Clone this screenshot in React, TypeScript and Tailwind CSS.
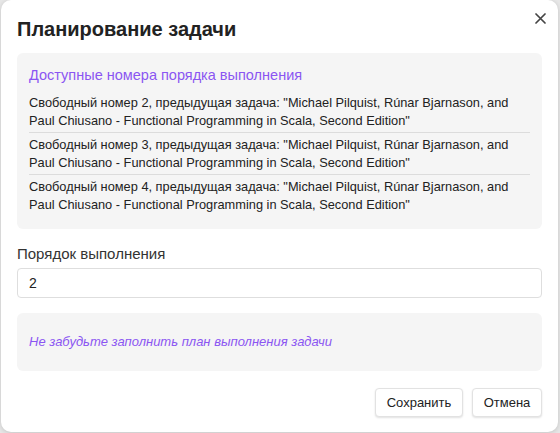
const items = [2, 3, 4].map(
  (n) =>
    `Свободный номер ${n}, предыдущая задача: "Michael Pilquist, Rúnar Bjarnason, and Paul Chiusano - Functional Programming in Scala, Second Edition"`
);

export default function App() {
  return (
    <div className="h-[433px] w-[560px] bg-[#e6e6e6] pl-px pr-[2px] pb-px font-['Liberation_Sans',Arial,sans-serif]">
      <div className="relative flex h-full flex-col rounded-[10px] bg-white px-4 pt-[17px] shadow-[0_1px_4px_rgba(0,0,0,0.15)]">
        <button className="absolute right-[12px] top-[12px] flex h-[12px] w-[12px] items-center justify-center text-[#444]">
          <svg width="11" height="11" viewBox="0 0 11 11" fill="none" stroke="currentColor" strokeWidth="1.7" strokeLinecap="round">
            <path d="M1 1l9 9M10 1l-9 9" />
          </svg>
        </button>

        <h1 className="text-[20px] font-bold leading-[24px] text-[#222]">Планирование задачи</h1>

        <div className="mt-[12px] rounded-[6px] bg-[#f5f5f5] px-3 pt-3 pb-[13px]">
          <h2 className="text-[14.5px] leading-5 text-[#8b55f2]">Доступные номера порядка выполнения</h2>
          <ul className="mt-[6px]">
            {items.map((t, i) => (
              <li
                key={i}
                className={`pt-[3px] pb-[2px] text-[12.8px] leading-[18px] text-[#222] ${i > 0 ? "border-t border-[#dcdcdc]" : ""}`}
              >
                {t}
              </li>
            ))}
          </ul>
        </div>

        <label className="mt-[15px] text-[15px] leading-5 text-[#333]">Порядок выполнения</label>
        <div className="mt-[4px] flex h-[30px] items-center rounded-[4px] border border-[#dedede] px-[11px] text-[14px] text-[#222]">
          2
        </div>

        <div className="mt-[15px] flex h-[58px] items-center rounded-[6px] bg-[#f5f5f5] px-3">
          <span className="text-[13px] italic text-[#8b55f2]">Не забудьте заполнить план выполнения задачи</span>
        </div>

        <div className="mt-[17px] flex justify-end gap-[9px]">
          <button className="h-[29px] w-[88px] rounded-[4px] border border-[#e2e2e2] bg-white text-[13px] text-[#222] shadow-[0_1px_2px_rgba(0,0,0,0.12)]">
            Сохранить
          </button>
          <button className="h-[29px] w-[70px] rounded-[4px] border border-[#e2e2e2] bg-white text-[13px] text-[#222] shadow-[0_1px_2px_rgba(0,0,0,0.12)]">
            Отмена
          </button>
        </div>
      </div>
    </div>
  );
}
